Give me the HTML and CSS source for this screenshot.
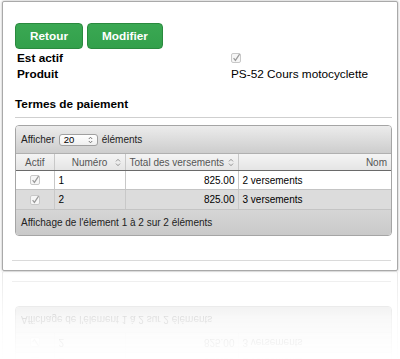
FILE: index.html
```html
<!DOCTYPE html>
<html lang="fr">
<head>
<meta charset="utf-8">
<title>Produit</title>
<link rel="stylesheet" href="styles.css">
</head>
<body>
<div class="panel">
  <div class="actions">
    <button class="btn">Retour</button>
    <button class="btn">Modifier</button>
  </div>
  <div class="info">
    <div class="label">Est actif</div>
    <div class="value"><svg class="chk" width="11" height="10" viewBox="0 0 11 10"><rect x="0.5" y="0.5" width="9" height="9" rx="1.5" fill="#f6f6f6" stroke="#c8c8c8"/><path d="M2.6 5.2 L4.4 7.4 L8.6 1.2" fill="none" stroke="#9a9a9a" stroke-width="1.2"/></svg></div>
    <div class="label">Produit</div>
    <div class="value">PS-52 Cours motocyclette</div>
  </div>
  <h2 class="section">Termes de paiement</h2>
  <div class="grid">
    <div class="toolbar">
      <span>Afficher</span>
      <span class="select"><span>20</span><svg width="5" height="8" viewBox="0 0 5 8"><path d="M0.8 3 L2.5 1.2 L4.2 3 M0.8 5 L2.5 6.8 L4.2 5" fill="none" stroke="#666" stroke-width="0.9"/></svg></span>
      <span>éléments</span>
    </div>
    <table class="tbl">
      <colgroup><col class="c1"><col class="c2"><col class="c3"><col></colgroup>
      <thead>
        <tr>
          <th class="center">Actif</th>
          <th class="center sort">Numéro<svg class="si" width="6" height="9" viewBox="0 0 6 9"><path d="M1 3.4 L3 1.3 L5 3.4 M1 5.6 L3 7.7 L5 5.6" fill="none" stroke="#8a8a8a" stroke-width="0.9"/></svg></th>
          <th class="sort left">Total des versements<svg class="si" width="6" height="9" viewBox="0 0 6 9"><path d="M1 3.4 L3 1.3 L5 3.4 M1 5.6 L3 7.7 L5 5.6" fill="none" stroke="#8a8a8a" stroke-width="0.9"/></svg></th>
          <th class="right">Nom</th>
        </tr>
      </thead>
      <tbody>
        <tr class="odd">
          <td class="center"><svg class="chk" width="11" height="10" viewBox="0 0 11 10"><rect x="0.5" y="0.5" width="9" height="9" rx="1.5" fill="#f6f6f6" stroke="#c8c8c8"/><path d="M2.6 5.2 L4.4 7.4 L8.6 1.2" fill="none" stroke="#9a9a9a" stroke-width="1.2"/></svg></td>
          <td>1</td>
          <td class="right">825.00</td>
          <td>2 versements</td>
        </tr>
        <tr class="even">
          <td class="center"><svg class="chk" width="11" height="10" viewBox="0 0 11 10"><rect x="0.5" y="0.5" width="9" height="9" rx="1.5" fill="#f6f6f6" stroke="#c8c8c8"/><path d="M2.6 5.2 L4.4 7.4 L8.6 1.2" fill="none" stroke="#9a9a9a" stroke-width="1.2"/></svg></td>
          <td>2</td>
          <td class="right">825.00</td>
          <td>3 versements</td>
        </tr>
      </tbody>
    </table>
    <div class="footer">Affichage de l'élement 1 à 2 sur 2 éléments</div>
  </div>
  <div class="rule"></div>
</div>
<div class="reflection" aria-hidden="true">
  <div class="panel ghost">
    <div class="grid">
      <table class="tbl">
        <colgroup><col class="c1"><col class="c2"><col class="c3"><col></colgroup>
        <tbody>
          <tr class="odd">
            <td class="center"><svg class="chk" width="11" height="10" viewBox="0 0 11 10"><rect x="0.5" y="0.5" width="9" height="9" rx="1.5" fill="#f6f6f6" stroke="#c8c8c8"/><path d="M2.6 5.2 L4.4 7.4 L8.6 1.2" fill="none" stroke="#9a9a9a" stroke-width="1.2"/></svg></td>
            <td>1</td>
            <td class="right">825.00</td>
            <td>2 versements</td>
          </tr>
          <tr class="even">
            <td class="center"><svg class="chk" width="11" height="10" viewBox="0 0 11 10"><rect x="0.5" y="0.5" width="9" height="9" rx="1.5" fill="#f6f6f6" stroke="#c8c8c8"/><path d="M2.6 5.2 L4.4 7.4 L8.6 1.2" fill="none" stroke="#9a9a9a" stroke-width="1.2"/></svg></td>
            <td>2</td>
            <td class="right">825.00</td>
            <td>3 versements</td>
          </tr>
        </tbody>
      </table>
      <div class="footer">Affichage de l'élement 1 à 2 sur 2 éléments</div>
    </div>
    <div class="rule"></div>
  </div>
</div>
</body>
</html>
```
FILE: styles.css
```css
html, body {
  margin: 0;
  padding: 0;
  background: #fff;
}
body {
  font-family: "Liberation Sans", Arial, sans-serif;
  color: #000;
  overflow: hidden;
}
.panel {
  margin: 1px 2px 0 2px;
  border: 1px solid #a9a9a9;
  border-radius: 2px;
  background: #fff;
  padding: 21px 5px 9px 12px;
  box-shadow: 0 0 3px rgba(0, 0, 0, 0.3);
}
.reflection {
  height: 89px;
  overflow: hidden;
  display: flex;
  flex-direction: column;
  justify-content: flex-end;
  transform: scaleY(-1);
  opacity: 0.5;
  -webkit-mask-image: linear-gradient(to bottom, transparent 0%, rgba(0, 0, 0, 0.25) 45%, #000 100%);
  mask-image: linear-gradient(to bottom, transparent 0%, rgba(0, 0, 0, 0.25) 45%, #000 100%);
}
.ghost {
  margin-top: 0;
  padding-top: 0;
  box-shadow: none;
  border-color: #d4d4d4;
}
.actions {
  display: flex;
  gap: 4px;
}
.btn {
  height: 26px;
  padding: 0 14px;
  font-family: "Liberation Sans", Arial, sans-serif;
  font-size: 11.8px;
  font-weight: bold;
  color: #fff;
  background: linear-gradient(#3aa853, #33a04b);
  border: 1px solid #2a8a3e;
  border-radius: 4px;
  line-height: 24px;
}
.info {
  display: grid;
  grid-template-columns: 214px 1fr;
  margin-top: 1px;
  padding-left: 2px;
  font-size: 11.8px;
  line-height: 16px;
}
.label {
  font-weight: bold;
}
.value {
  display: flex;
  align-items: center;
}
.chk {
  display: block;
}
.section {
  margin: 14px 0 0 0;
  padding: 0 0 5px 0;
  font-size: 11.8px;
  line-height: 16px;
  font-weight: bold;
  border-bottom: 1px solid #cfcfcf;
}
.grid {
  margin-top: 7px;
  border: 1px solid #a5a5a5;
  border-radius: 4px;
  overflow: hidden;
  font-size: 10px;
}
.toolbar {
  height: 27px;
  display: flex;
  align-items: center;
  gap: 4px;
  padding-left: 5px;
  color: #222;
  background: linear-gradient(#ececec, #cdcdcd);
  border-bottom: 1px solid #b0b0b0;
}
.select {
  width: 39px;
  height: 12px;
  box-sizing: border-box;
  display: flex;
  align-items: center;
  justify-content: space-between;
  padding: 0 4px 0 4px;
  background: linear-gradient(#ffffff, #f0f0f0);
  border: 1px solid #a0a0a0;
  border-radius: 3px;
  font-size: 9.5px;
  color: #000;
}
.tbl {
  width: 100%;
  border-collapse: collapse;
  table-layout: fixed;
}
.c1 { width: 38px; }
.c2 { width: 71px; }
.c3 { width: 113px; }
.tbl th {
  height: 16px;
  padding: 0 4px;
  font-weight: normal;
  color: #555;
  background: linear-gradient(#f4f4f4, #e4e4e4);
  border-right: 1px solid #c8c8c8;
  border-bottom: 1px solid #6a6a6a;
  white-space: nowrap;
}
.tbl th:last-child,
.tbl td:last-child {
  border-right: none;
}
.tbl td {
  height: 18px;
  padding: 0 3px 0 4px;
  border-right: 1px solid #c8c8c8;
  border-bottom: 1px solid #c4c4c4;
  color: #000;
}
.tbl .even td {
  background: #dcdcdc;
  height: 19px;
}
.tbl .odd td {
  background: #fff;
}
.center { text-align: center; }
.right { text-align: right; }
.left { text-align: left; }
.tbl td.center .chk {
  margin: 0 auto;
}
.sort {
  position: relative;
}
.si {
  position: absolute;
  right: 4px;
  top: 4px;
}
.footer {
  height: 25px;
  display: flex;
  align-items: center;
  padding-left: 5px;
  color: #222;
  background: linear-gradient(#d6d6d6, #c9c9c9);
}
.rule {
  margin: 24px 1px 0 -3px;
  border-top: 1px solid #dadada;
}
```
